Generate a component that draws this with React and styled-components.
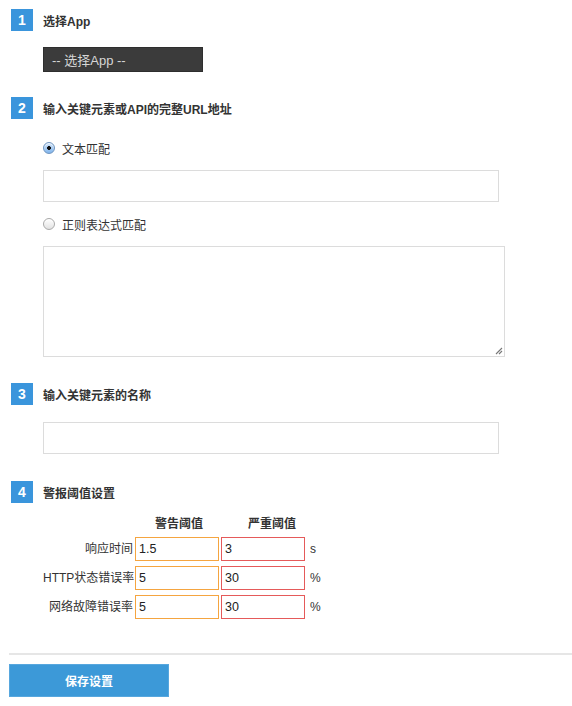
import React from "react";
import styled, { createGlobalStyle } from "styled-components";

const Global = createGlobalStyle`
  html, body { margin: 0; padding: 0; background: #fff; }
  body {
    font-family: "Liberation Sans", "Noto Sans CJK SC", sans-serif;
    font-size: 12px;
    color: #333;
  }
  * { box-sizing: border-box; }
`;

const Page = styled.div`
  width: 572px;
  padding: 9px 0 0 0;
`;

const Form = styled.div`
  padding-left: 11px;
  display: flex;
  flex-direction: column;
`;

const Section = styled.section`
  display: flex;
  flex-direction: column;
  margin-bottom: ${(p) => p.$mb || 26}px;
`;

const Header = styled.div`
  display: flex;
  align-items: center;
  height: 22px;
`;

const Badge = styled.span`
  width: 22px;
  height: 22px;
  background: #3a95dc;
  color: #fff;
  font-weight: bold;
  font-size: 14px;
  display: flex;
  align-items: center;
  justify-content: center;
`;

const Title = styled.h3`
  margin: 0 0 0 10px;
  font-size: 12px;
  font-weight: bold;
  color: #333;
`;

const Body = styled.div`
  margin-left: 32px;
  margin-top: ${(p) => p.$mt || 16}px;
  display: flex;
  flex-direction: column;
`;

const Select = styled.div`
  width: 160px;
  height: 25px;
  background: #3b3b3b;
  border: 1px solid #2e2e2e;
  color: #d6d6d6;
  font-size: 13px;
  display: flex;
  align-items: center;
  padding-left: 8px;
`;

const RadioRow = styled.label`
  display: flex;
  align-items: center;
  height: 16px;
  margin: 0 0 14px 0;
  font-size: 12px;
  color: #333;
`;

const Radio = styled.span`
  width: 12px;
  height: 12px;
  border-radius: 50%;
  border: 1px solid ${(p) => (p.$checked ? "#6f95c0" : "#a9a9a9")};
  background: ${(p) =>
    p.$checked
      ? "radial-gradient(circle at 50% 50%, #111 0 1.6px, transparent 2.2px), linear-gradient(#d4e6fa, #7fb4ec)"
      : "linear-gradient(#ffffff, #e2e2e2)"};
  box-shadow: inset 0 1px 1px rgba(255,255,255,0.8);
  margin-right: 7px;
  flex: none;
`;

const TextInput = styled.div`
  width: ${(p) => p.$w || 456}px;
  height: ${(p) => p.$h || 32}px;
  border: 1px solid #dcdcdc;
  background: #fff;
  margin-bottom: ${(p) => p.$mb || 0}px;
`;

const TextArea = styled.div`
  position: relative;
  width: 462px;
  height: 111px;
  border: 1px solid #dcdcdc;
  background: #fff;
`;

const Grip = styled.svg`
  position: absolute;
  right: 1px;
  bottom: 1px;
`;

const Grid = styled.div`
  display: grid;
  grid-template-columns: 92px 86px 84px auto;
  row-gap: 5px;
  margin-left: -32px;
  padding-left: 32px;
`;

const HeadCell = styled.div`
  font-weight: bold;
  font-size: 12px;
  color: #333;
  height: 16px;
  line-height: 16px;
  padding-left: ${(p) => p.$off || 0}px;
  white-space: nowrap;
`;

const Label = styled.div`
  text-align: right;
  padding-right: 2px;
  height: 24px;
  line-height: 24px;
  font-size: 12px;
  color: #333;
  white-space: nowrap;
`;

const NumInput = styled.div`
  width: 84px;
  height: 24px;
  border: 1px solid ${(p) => (p.$level === "warn" ? "#f5a540" : "#e55a5a")};
  padding-left: 3px;
  line-height: 22px;
  font-size: 12.5px;
  color: #222;
`;

const Unit = styled.div`
  height: 24px;
  line-height: 24px;
  padding-left: 5px;
  font-size: 12px;
  color: #333;
`;

const Footer = styled.div`
  margin-top: 8px;
  margin-left: 9px;
  border-top: 2px solid #e6e6e6;
  padding-top: 9px;
`;

const SaveButton = styled.button`
  width: 160px;
  height: 33px;
  border: 1px solid #57a7de;
  background: #3c99d8;
  color: #fff;
  font-family: inherit;
  font-weight: bold;
  font-size: 12px;
  cursor: pointer;
`;

const rows = [
  { label: "响应时间", warn: "1.5", crit: "3", unit: "s" },
  { label: "HTTP状态错误率", warn: "5", crit: "30", unit: "%" },
  { label: "网络故障错误率", warn: "5", crit: "30", unit: "%" },
];

export default function App() {
  return (
    <Page>
      <Global />
      <Form>
        <Section $mb={25}>
          <Header>
            <Badge>1</Badge>
            <Title>选择App</Title>
          </Header>
          <Body>
            <Select>-- 选择App --</Select>
          </Body>
        </Section>

        <Section $mb={26}>
          <Header>
            <Badge>2</Badge>
            <Title>输入关键元素或API的完整URL地址</Title>
          </Header>
          <Body $mt={21}>
            <RadioRow>
              <Radio $checked />
              文本匹配
            </RadioRow>
            <TextInput $mb={14} />
            <RadioRow>
              <Radio />
              正则表达式匹配
            </RadioRow>
            <TextArea>
              <Grip width="9" height="9" viewBox="0 0 9 9">
                <path d="M8 2 L2 8 M8 5 L5 8" stroke="#777" strokeWidth="1.1" />
              </Grip>
            </TextArea>
          </Body>
        </Section>

        <Section $mb={27}>
          <Header>
            <Badge>3</Badge>
            <Title>输入关键元素的名称</Title>
          </Header>
          <Body $mt={17}>
            <TextInput />
          </Body>
        </Section>

        <Section $mb={0}>
          <Header>
            <Badge>4</Badge>
            <Title>警报阈值设置</Title>
          </Header>
          <Body $mt={13}>
            <Grid>
              <HeadCell />
              <HeadCell $off={20}>警告阈值</HeadCell>
              <HeadCell $off={27}>严重阈值</HeadCell>
              <HeadCell />
              {rows.map((r) => (
                <React.Fragment key={r.label}>
                  <Label>{r.label}</Label>
                  <NumInput $level="warn">{r.warn}</NumInput>
                  <NumInput $level="crit">{r.crit}</NumInput>
                  <Unit>{r.unit}</Unit>
                </React.Fragment>
              ))}
            </Grid>
          </Body>
        </Section>
      </Form>
      <Footer>
        <SaveButton>保存设置</SaveButton>
      </Footer>
    </Page>
  );
}
